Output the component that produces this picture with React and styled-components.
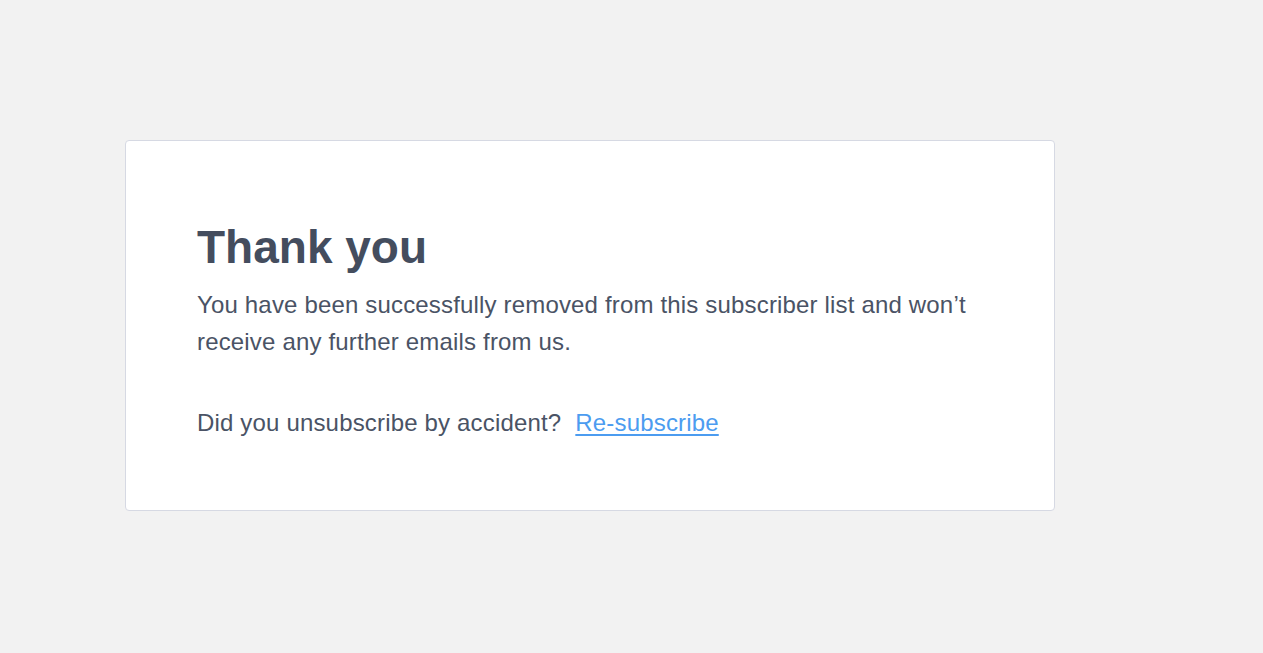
import React from "react";
import styled, { createGlobalStyle } from "styled-components";

const Global = createGlobalStyle`
  html, body { margin: 0; padding: 0; background: #f2f2f2; }
  body { font-family: "Liberation Sans", Arial, sans-serif; -webkit-font-smoothing: antialiased; }
`;

const Page = styled.main`
  min-height: 653px;
  box-sizing: border-box;
  padding: 140px 0 0 125px;
  display: flex;
  align-items: flex-start;
`;

const Card = styled.section`
  box-sizing: border-box;
  width: 930px;
  height: 371px;
  background: #ffffff;
  border: 1px solid #d6d9e3;
  border-radius: 4px;
  padding: 78px 72px 0 71px;
  display: flex;
  flex-direction: column;
`;

const Title = styled.h1`
  margin: 0;
  font-size: 46px;
  line-height: 56px;
  font-weight: 700;
  color: #444d5e;
`;

const Text = styled.p`
  margin: ${(p) => p.$mt || 0}px 0 0;
  font-size: 24px;
  line-height: 37px;
  letter-spacing: 0.17px;
  color: #4a5365;
`;

const Link = styled.a`
  color: #4c9cf0;
  text-decoration: underline;
  text-underline-offset: 3px;
  margin-left: 14px;
  cursor: pointer;
`;

export default function App() {
  return (
    <>
      <Global />
      <Page>
        <Card>
          <Title>Thank you</Title>
          <Text $mt={11}>
            You have been successfully removed from this subscriber list and won’t receive any further emails from us.
          </Text>
          <Text $mt={44}>
            Did you unsubscribe by accident?<Link>Re-subscribe</Link>
          </Text>
        </Card>
      </Page>
    </>
  );
}
